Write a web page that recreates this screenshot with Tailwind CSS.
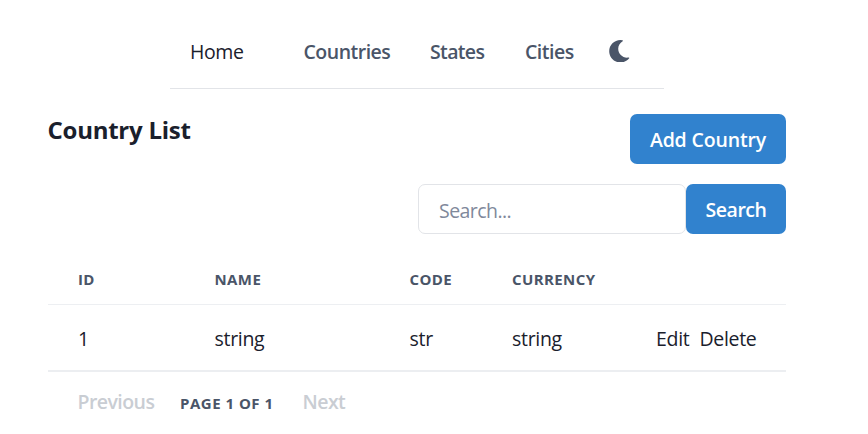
<!DOCTYPE html>
<html lang="en">
<head>
<meta charset="utf-8">
<title>Country List</title>
<script src="https://cdn.jsdelivr.net/npm/@tailwindcss/browser@4"></script>
</head>
<body class="bg-white text-[#1a202c] text-[19.5px] leading-[30px] tracking-[-0.3px] overflow-hidden font-['Open_Sans','Noto_Sans',sans-serif]">
<nav class="ml-[170px] w-[494px] h-[89px] border-b border-[#e2e4e8] flex items-center pt-4 pl-5 font-semibold text-[#4a5568] tracking-[-0.5px]">
  <a class="w-[113.5px] font-normal text-[#1a202c] tracking-[-0.4px]">Home</a>
  <a class="w-[126.5px]">Countries</a>
  <a class="w-[95px] tracking-[-0.65px]">States</a>
  <a class="w-[83px]">Cities</a>
  <svg class="size-[22.5px] -mt-0.5" viewBox="0 0 512 512" fill="currentColor"><path d="M283.211 512c78.962 0 151.079-35.925 198.857-94.792 7.068-8.708-.639-21.43-11.562-19.35-124.203 23.654-238.262-71.576-238.262-196.954 0-72.222 38.662-138.635 101.498-174.394 9.686-5.512 7.25-20.197-3.756-22.23A258.156 258.156 0 0 0 283.211 0c-141.309 0-256 114.511-256 256 0 141.309 114.511 256 256 256z"/></svg>
</nav>
<main class="ml-12 w-[738px] pt-[25px]">
  <div class="flex justify-between items-start">
    <h1 class="-ml-[0.5px] text-[24px] font-bold leading-8 tracking-[-0.25px]">Country List</h1>
    <button class="w-[156px] h-[50px] pt-0.5 rounded-[7px] bg-[#3182ce] text-white font-semibold tracking-[-0.15px]">Add Country</button>
  </div>
  <form class="mt-5 flex justify-end">
    <input class="w-[268px] h-[50px] pl-5 pt-0.5 border border-[#e2e4e8] rounded-[7px] placeholder:text-[#7f899b] tracking-[-0.55px]" placeholder="Search...">
    <button type="button" class="w-[100px] h-[50px] pt-0.5 rounded-[7px] bg-[#3182ce] text-white font-semibold tracking-[-0.5px]">Search</button>
  </form>
  <table class="mt-5 w-full table-fixed border-collapse text-left">
    <colgroup><col class="w-[136.5px]"><col class="w-[195px]"><col class="w-[102.5px]"><col class="w-[144px]"><col></colgroup>
    <thead class="text-[15px] leading-5 font-bold text-[#4a5568] tracking-[0.4px]">
      <tr class="h-[50px] border-b border-[#edeff2]">
        <th class="pl-[30px]">ID</th><th class="pl-[30px]">NAME</th><th class="pl-[30px]">CODE</th><th class="pl-[30px]">CURRENCY</th><th></th>
      </tr>
    </thead>
    <tbody>
      <tr class="h-[67px] border-b-2 border-[#eceef1]">
        <td class="pl-[30px] pt-1">1</td><td class="pl-[30px] pt-1">string</td><td class="pl-[30px] pt-1">str</td><td class="pl-[30px] pt-1">string</td>
        <td class="pl-[30px] pt-1"><div class="flex gap-2.5"><a>Edit</a><a>Delete</a></div></td>
      </tr>
    </tbody>
  </table>
  <div class="flex items-center pl-[29.5px] pt-3.5 font-semibold text-[#c9cdd3] tracking-[-0.55px]">
    <button class="w-[102.5px] text-left">Previous</button>
    <span class="w-[122.5px] pt-[2px] text-[15px] font-bold text-[#4a5568] tracking-[0.5px]">PAGE 1 OF 1</span>
    <button>Next</button>
  </div>
</main>
</body>
</html>
